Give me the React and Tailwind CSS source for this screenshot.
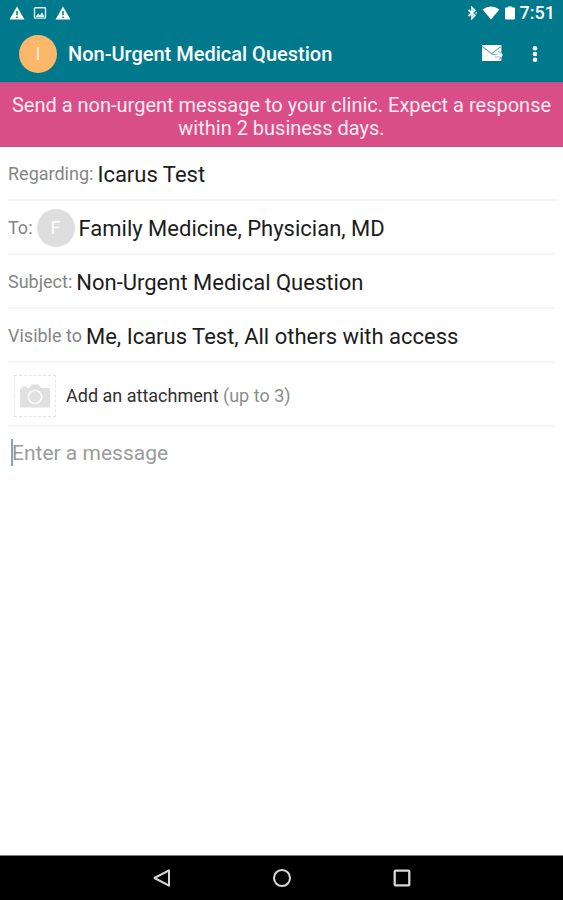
const rowClass = "flex h-[54px] items-center gap-1 border-b-2 border-[#f4f4f4] pt-0.5";
const labelClass = "shrink-0 text-lg text-[#858585]";
const valueClass = "min-w-0 flex-1 bg-transparent text-[22px] text-[#1c1c1c] outline-none";

function WarningIcon() {
  return (
    <svg width="16" height="14" viewBox="0 0 16 14">
      <path d="M8 0.5 15.5 13.5H0.5Z" fill="#fff" />
      <path d="M8 5v4.2M8 10.4v1.6" stroke="#00798c" strokeWidth="1.5" />
    </svg>
  );
}

function StatusBar() {
  return (
    <div className="flex h-[25px] items-center justify-between pr-2 pl-[9px]">
      <div className="flex items-center gap-2">
        <WarningIcon />
        <svg width="14" height="14" viewBox="0 0 14 14">
          <rect x="1.5" y="1.7" width="11" height="10.4" rx="0.6" fill="none" stroke="#dcebee" strokeWidth="1.4" />
          <path d="M2.5 11 5.2 7.3 7 9.2 9 6.3 11.6 11Z" fill="#dcebee" />
        </svg>
        <WarningIcon />
      </div>
      <div className="flex items-center">
        <svg className="mr-1" width="12" height="14" viewBox="0 0 12 14">
          <path d="M2.5 4 8.8 9.6 6 12.4V1.6L8.8 4.4 2.5 10" fill="none" stroke="#f1f9fa" strokeWidth="1.7" />
          <path d="M9.4 7H11" stroke="#f1f9fa" strokeWidth="1.6" />
        </svg>
        <svg className="mr-1" width="18" height="14" viewBox="0 0 18 14">
          <path d="M9 13.4 0.6 3.5Q9 -2.4 17.4 3.5Z" fill="#fff" />
        </svg>
        <svg className="mr-1" width="12" height="14" viewBox="0 0 12 14">
          <path d="M1 2.2Q1 1.5 1.7 1.5H3.8V0.4h4.4v1.1h2.1Q11 1.5 11 2.2V12.6q0 .8-.8.8H1.8Q1 13.4 1 12.6Z" fill="#fff" />
        </svg>
        <span className="text-lg leading-6 font-medium">7:51</span>
      </div>
    </div>
  );
}

function AppBar() {
  return (
    <header className="flex h-[57px] items-center pr-4 pl-[19px]">
      <div className="flex size-[38px] items-center justify-center rounded-full bg-[#fdb76b] text-lg text-[#fff1dc]">I</div>
      <h1 className="ml-[11px] flex-1 text-xl font-medium">Non-Urgent Medical Question</h1>
      <button type="button" aria-label="Send message" className="mr-5">
        <svg width="22" height="20" viewBox="0 0 22 20">
          <path d="M1 1H20.4v7.4l1.4 2.6-1.4 2.6V17H1Z" fill="#fff" />
          <path d="M1.2 2.4 10.5 9.6 20 2.6" fill="none" stroke="#56a0aa" strokeWidth="1.1" />
          <path d="M10.5 10.6 16.5 10.2M13.5 13H19.4M17 7.4l3.6 2.2M18 15.5l2.6-2.4" fill="none" stroke="#8dbcb5" strokeWidth="1.2" />
        </svg>
      </button>
      <button type="button" aria-label="More options" className="flex w-6 justify-center">
        <svg width="6" height="18" viewBox="0 0 6 18">
          <circle cx="3" cy="3.2" r="2.3" fill="#fff" />
          <circle cx="3" cy="9" r="2.3" fill="#fff" />
          <circle cx="3" cy="14.8" r="2.3" fill="#fff" />
        </svg>
      </button>
    </header>
  );
}

function NavBar() {
  return (
    <nav className="flex h-[45px] items-center justify-center gap-24 border-t border-[#7c7c7c] bg-black">
      <button type="button" aria-label="Back" className="flex w-6 justify-center">
        <svg width="20" height="20" viewBox="0 0 20 20">
          <path d="M17 2.3V17.7L2.5 10Z" fill="none" stroke="#d6d6d6" strokeWidth="2" strokeLinejoin="round" />
        </svg>
      </button>
      <button type="button" aria-label="Home" className="flex w-6 justify-center">
        <svg width="20" height="20" viewBox="0 0 20 20">
          <circle cx="10" cy="10" r="8" fill="none" stroke="#d6d6d6" strokeWidth="2.1" />
        </svg>
      </button>
      <button type="button" aria-label="Recent apps" className="flex w-6 justify-center">
        <svg width="20" height="20" viewBox="0 0 20 20">
          <rect x="2.7" y="2.7" width="14.6" height="14.6" rx="0.8" fill="none" stroke="#d6d6d6" strokeWidth="2.3" />
        </svg>
      </button>
    </nav>
  );
}

export default function App() {
  return (
    <div className="flex min-h-screen flex-col bg-white font-[Roboto,sans-serif]">
      <div className="bg-[#00798c] text-white">
        <StatusBar />
        <AppBar />
      </div>

      <p className="border-t border-[#a65f87] bg-[#da4e88] px-2 pt-[11px] pb-[7px] text-center text-xl leading-[23px] text-[#ffe9f3]">
        Send a non-urgent message to your clinic. Expect a response within 2 business days.
      </p>

      <main className="flex flex-1 flex-col px-2">
        <div className={rowClass}>
          <label htmlFor="regarding" className={labelClass}>Regarding:</label>
          <input id="regarding" className={valueClass} defaultValue="Icarus Test" />
        </div>
        <div className={rowClass}>
          <label htmlFor="to" className={labelClass}>To:</label>
          <div className="flex size-[38px] shrink-0 items-center justify-center rounded-full bg-[#dedede] text-lg text-white">F</div>
          <input id="to" className={valueClass} defaultValue="Family Medicine, Physician, MD" />
        </div>
        <div className={rowClass}>
          <label htmlFor="subject" className={labelClass}>Subject:</label>
          <input id="subject" className={valueClass} defaultValue="Non-Urgent Medical Question" />
        </div>
        <div className={rowClass}>
          <label htmlFor="visible" className={labelClass}>Visible to</label>
          <input id="visible" className={valueClass} defaultValue="Me, Icarus Test, All others with access" />
        </div>

        <button type="button" className="flex h-[64px] items-center gap-[10px] border-b-2 border-[#f4f4f4] pt-1 pl-[6px] text-left text-lg text-[#303030]">
          <span className="flex size-[42px] items-center justify-center border border-dashed border-[#e4e4e4]">
            <svg width="32" height="26" viewBox="0 0 32 26">
              <path d="M1 5.5H2.5V3.5h5v1.5H10L12.5 1.5h7L22 5h9v19.5H1Z" fill="#e0e0e0" />
              <circle cx="16" cy="14" r="6.6" fill="none" stroke="#f8f8f8" strokeWidth="1.8" />
            </svg>
          </span>
          <span>
            Add an attachment <span className="text-[#8d8d8d]">(up to 3)</span>
          </span>
        </button>

        <div className="relative flex flex-1 pt-3">
          <span className="absolute top-3 left-[3px] h-[27px] w-[2px] bg-[#7fa5d8]" />
          <textarea
            aria-label="Message"
            placeholder="Enter a message"
            className="flex-1 resize-none bg-transparent pl-1 text-[21px] leading-[28px] text-[#1c1c1c] outline-none placeholder:text-[#9b9b9b]"
          />
        </div>
      </main>

      <NavBar />
    </div>
  );
}
